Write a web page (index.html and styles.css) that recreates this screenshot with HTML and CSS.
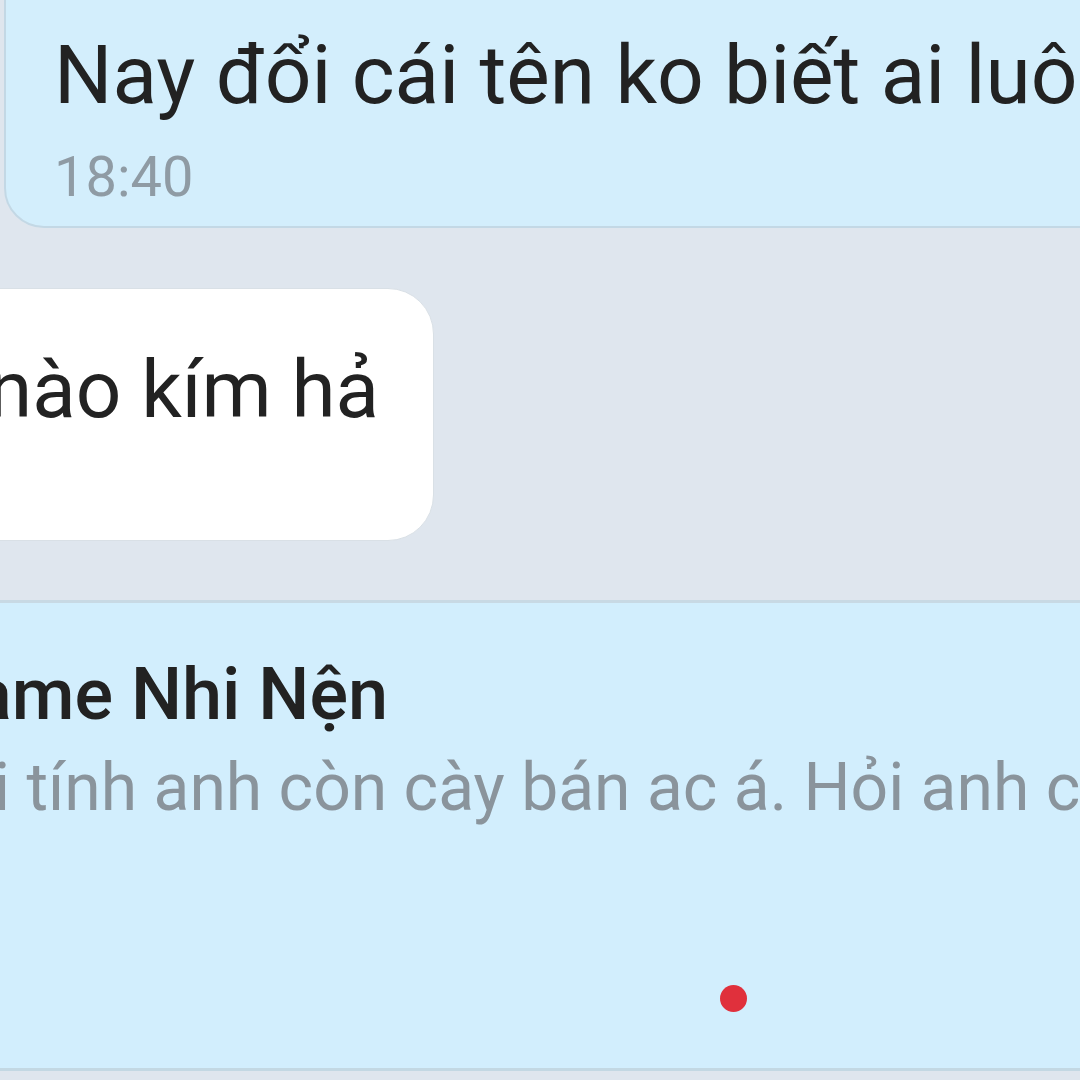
FILE: index.html
```html
<!DOCTYPE html>
<html lang="vi">
<head>
<meta charset="utf-8">
<link rel="stylesheet" href="styles.css">
</head>
<body>
<div class="chat">
  <div class="msg msg-out">
    <div class="msg-text">Nay đổi cái tên ko biết ai luôn</div>
    <div class="msg-time">18:40</div>
  </div>
  <div class="msg msg-in">
    <div class="msg-text">nào kím hả</div>
  </div>
  <div class="preview">
    <div class="preview-name">ame Nhi Nện</div>
    <div class="preview-text">i tính anh còn cày bán ac á. Hỏi anh có</div>
    <div class="preview-foot"><span class="dot"></span></div>
  </div>
</div>
</body>
</html>
```
FILE: styles.css
```css
html, body {
  margin: 0;
  padding: 0;
}
body {
  width: 1080px;
  height: 1080px;
  overflow: hidden;
  background: #dfe6ee;
  font-family: Roboto, "Noto Sans", sans-serif;
}
.chat {
  display: flex;
  flex-direction: column;
}
.msg {
  box-sizing: border-box;
}
.msg-out {
  margin-top: -40px;
  margin-left: 4px;
  width: 1200px;
  height: 268px;
  background: #d3eefc;
  border: 2px solid #c3d8e5;
  border-radius: 40px;
  padding: 63px 0 0 48px;
}
.msg-out .msg-text {
  font-size: 82px;
  line-height: 100px;
  color: #222;
  white-space: nowrap;
}
.msg-time {
  font-size: 56px;
  line-height: 60px;
  color: #8f9ba4;
  margin-top: 22px;
}
.msg-in {
  margin-top: 60px;
  margin-left: -60px;
  width: 494px;
  height: 253px;
  background: #fff;
  border: 1px solid #d9e0e6;
  border-radius: 46px;
  padding: 51px 0 0 52px;
}
.msg-in .msg-text {
  font-size: 80px;
  line-height: 100px;
  color: #222;
  white-space: nowrap;
  margin-left: -5px;
}
.preview {
  margin-top: 59px;
  height: 471px;
  box-sizing: border-box;
  background: #d2eefd;
  border-top: 3px solid #c8d9e4;
  border-bottom: 3px solid #c3d8e3;
  padding-top: 52px;
  white-space: nowrap;
}
.preview-name {
  font-size: 72px;
  font-weight: 500;
  line-height: 80px;
  color: #222;
  margin-left: -27px;
}
.preview-text {
  font-size: 66px;
  line-height: 80px;
  color: #8a949c;
  margin-top: 13px;
  margin-left: -6px;
}
.preview-foot {
  display: flex;
  padding-left: 720px;
  margin-top: 157px;
}
.dot {
  width: 27px;
  height: 27px;
  border-radius: 50%;
  background: #e0303c;
}
```
